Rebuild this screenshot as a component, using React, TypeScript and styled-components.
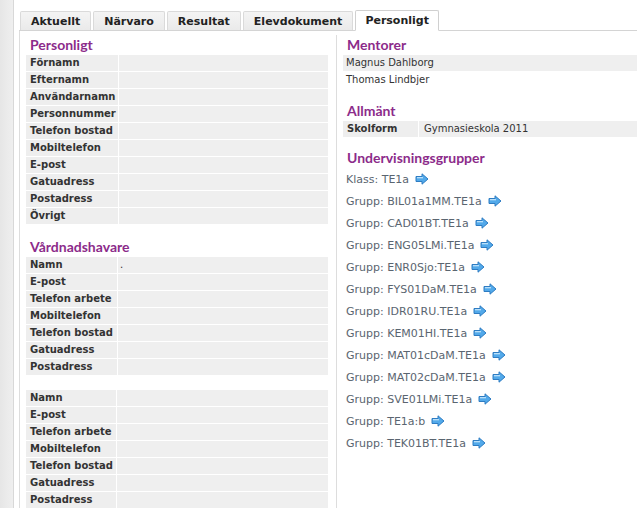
import * as React from 'react';
import styled, { createGlobalStyle } from 'styled-components';

const GlobalStyle = createGlobalStyle`
  html, body {
    margin: 0;
    padding: 0;
    background: #ffffff;
  }
  body {
    font-family: "DejaVu Sans", Verdana, sans-serif;
    color: #333333;
    overflow: hidden;
  }
`;

const tabs = ['Aktuellt', 'Närvaro', 'Resultat', 'Elevdokument', 'Personligt'];

const personal = [
  'Förnamn',
  'Efternamn',
  'Användarnamn',
  'Personnummer',
  'Telefon bostad',
  'Mobiltelefon',
  'E-post',
  'Gatuadress',
  'Postadress',
  'Övrigt',
];

const guardian = [
  'Namn',
  'E-post',
  'Telefon arbete',
  'Mobiltelefon',
  'Telefon bostad',
  'Gatuadress',
  'Postadress',
];

const groups = [
  'Klass: TE1a',
  'Grupp: BIL01a1MM.TE1a',
  'Grupp: CAD01BT.TE1a',
  'Grupp: ENG05LMi.TE1a',
  'Grupp: ENR0Sjo:TE1a',
  'Grupp: FYS01DaM.TE1a',
  'Grupp: IDR01RU.TE1a',
  'Grupp: KEM01HI.TE1a',
  'Grupp: MAT01cDaM.TE1a',
  'Grupp: MAT02cDaM.TE1a',
  'Grupp: SVE01LMi.TE1a',
  'Grupp: TE1a:b',
  'Grupp: TEK01BT.TE1a',
];

function Arrow() {
  return (
    <svg width="14" height="12" viewBox="0 0 14 12">
      <polygon
        points="1,3.5 7,3.5 7,0.8 13,6 7,11.2 7,8.5 1,8.5"
        fill="#52a9ea"
        stroke="#2e7cc2"
        strokeWidth="1"
        strokeLinejoin="round"
      />
      <line x1="2" y1="4.7" x2="8" y2="4.7" stroke="#c4e6fc" strokeWidth="1.2" />
    </svg>
  );
}

function InfoTable({ labels, labelWidth, dot }: { labels: string[]; labelWidth: number; dot?: boolean }) {
  return (
    <Table>
      {labels.map((l, i) => (
        <Row key={i}>
          <LabelCell $width={labelWidth}>{l}</LabelCell>
          <ValueCell>{dot && i === 0 ? '.' : ''}</ValueCell>
        </Row>
      ))}
    </Table>
  );
}

export default function App() {
  return (
    <>
      <GlobalStyle />
      <Page>
        <LeftStrip />
        <Main>
          <TabBar>
            {tabs.map((t) => (
              <Tab key={t} $active={t === 'Personligt'}>
                {t}
              </Tab>
            ))}
          </TabBar>
          <Panel>
            <Column>
              <Heading>Personligt</Heading>
              <InfoTable labels={personal} labelWidth={93} />

              <Heading $gap={8}>Vårdnadshavare</Heading>
              <InfoTable labels={guardian} labelWidth={92} dot />
              <Spacer />
              <InfoTable labels={guardian} labelWidth={91} />
            </Column>

            <RightColumn>
              <Heading>Mentorer</Heading>
              <Table>
                <PlainRow $shaded>Magnus Dahlborg</PlainRow>
                <PlainRow>Thomas Lindbjer</PlainRow>
              </Table>

              <Heading $gap={8}>Allmänt</Heading>
              <Table>
                <Row>
                  <LabelCell $width={76}>Skolform</LabelCell>
                  <ValueCell $text>Gymnasieskola 2011</ValueCell>
                </Row>
              </Table>

              <Heading $gap={6}>Undervisningsgrupper</Heading>
              <LinkList>
                {groups.map((g) => (
                  <GroupLink key={g}>
                    <span>{g}</span>
                    <Arrow />
                  </GroupLink>
                ))}
              </LinkList>
            </RightColumn>
          </Panel>
        </Main>
      </Page>
    </>
  );
}

const Page = styled.div`
  display: flex;
  width: 637px;
  height: 508px;
  overflow: hidden;
`;

const LeftStrip = styled.div`
  width: 13px;
  flex: none;
  background: linear-gradient(to right, #e6e6e6, #efefef);
  border-right: 1px solid #d8d8d8;
`;

const Main = styled.div`
  flex: 1;
  display: flex;
  flex-direction: column;
  margin-left: 5px;
  padding-top: 10px;
  min-width: 0;
`;

const TabBar = styled.div`
  display: flex;
  align-items: flex-end;
  gap: 2px;
  height: 20px;
  padding-left: 1px;
  border-bottom: 1px solid #d4d4d4;
`;

const Tab = styled.div<{ $active?: boolean }>`
  height: ${({ $active }) => ($active ? '21px' : '19px')};
  margin-bottom: ${({ $active }) => ($active ? '-1px' : '0')};
  padding: 0 ${({ $active }) => ($active ? '9px' : '10px')};
  display: flex;
  align-items: center;
  justify-content: center;
  min-width: 71px;
  box-sizing: border-box;
  font-size: 11px;
  font-weight: bold;
  color: #222222;
  border: 1px solid ${({ $active }) => ($active ? '#d0d0d0' : '#dadada')};
  border-bottom: ${({ $active }) => ($active ? '1px solid #ffffff' : 'none')};
  border-radius: 2px 2px 0 0;
  background: ${({ $active }) =>
    $active ? '#ffffff' : 'linear-gradient(to bottom, #f4f4f4, #eaeaea)'};
  padding-top: ${({ $active }) => ($active ? '0' : '1px')};
`;

const Panel = styled.div`
  flex: 1;
  display: grid;
  grid-template-columns: 316px 1fr;
  border-left: 1px solid #dddddd;
`;

const Column = styled.div`
  padding: 0 8px 0 6px;
  display: flex;
  flex-direction: column;
`;

const RightColumn = styled(Column)`
  border-left: 1px solid #dddddd;
  margin-top: 4px;
  padding: 0 0 0 6px;
  & > h2:first-child {
    padding-top: 1px;
  }
`;

const Heading = styled.h2<{ $gap?: number }>`
  margin: ${({ $gap }) => $gap ?? 0}px 0 0 0;
  padding: 5px 0 1px 4px;
  font-family: Lato, "Open Sans", sans-serif;
  font-size: 14px;
  font-weight: bold;
  line-height: 18px;
  color: #8c2b8a;
`;

const Table = styled.div`
  display: flex;
  flex-direction: column;
`;

const Row = styled.div`
  display: flex;
  height: 16px;
  border-bottom: 1px solid #ffffff;
`;

const LabelCell = styled.div<{ $width: number }>`
  width: ${({ $width }) => $width}px;
  flex: none;
  box-sizing: border-box;
  padding-left: 4px;
  background: #eeeeee;
  border-right: 1px solid #ffffff;
  font-size: 10px;
  font-weight: bold;
  line-height: 16px;
  color: #333333;
  white-space: nowrap;
`;

const ValueCell = styled.div<{ $text?: boolean }>`
  flex: 1;
  background: #efefef;
  padding-left: ${({ $text }) => ($text ? '5px' : '2px')};
  font-size: 10px;
  line-height: 16px;
  color: #333333;
`;

const PlainRow = styled.div<{ $shaded?: boolean }>`
  height: 16px;
  border-bottom: 1px solid #ffffff;
  padding-left: 3px;
  background: ${({ $shaded }) => ($shaded ? '#efefef' : '#ffffff')};
  font-size: 10px;
  line-height: 16px;
  color: #333333;
`;

const Spacer = styled.div`
  height: 14px;
`;

const LinkList = styled.div`
  display: flex;
  flex-direction: column;
`;

const GroupLink = styled.a`
  display: flex;
  align-items: center;
  gap: 6px;
  height: 22px;
  padding-left: 3px;
  font-size: 11px;
  color: #5a6570;
  text-decoration: none;
  cursor: pointer;
`;
